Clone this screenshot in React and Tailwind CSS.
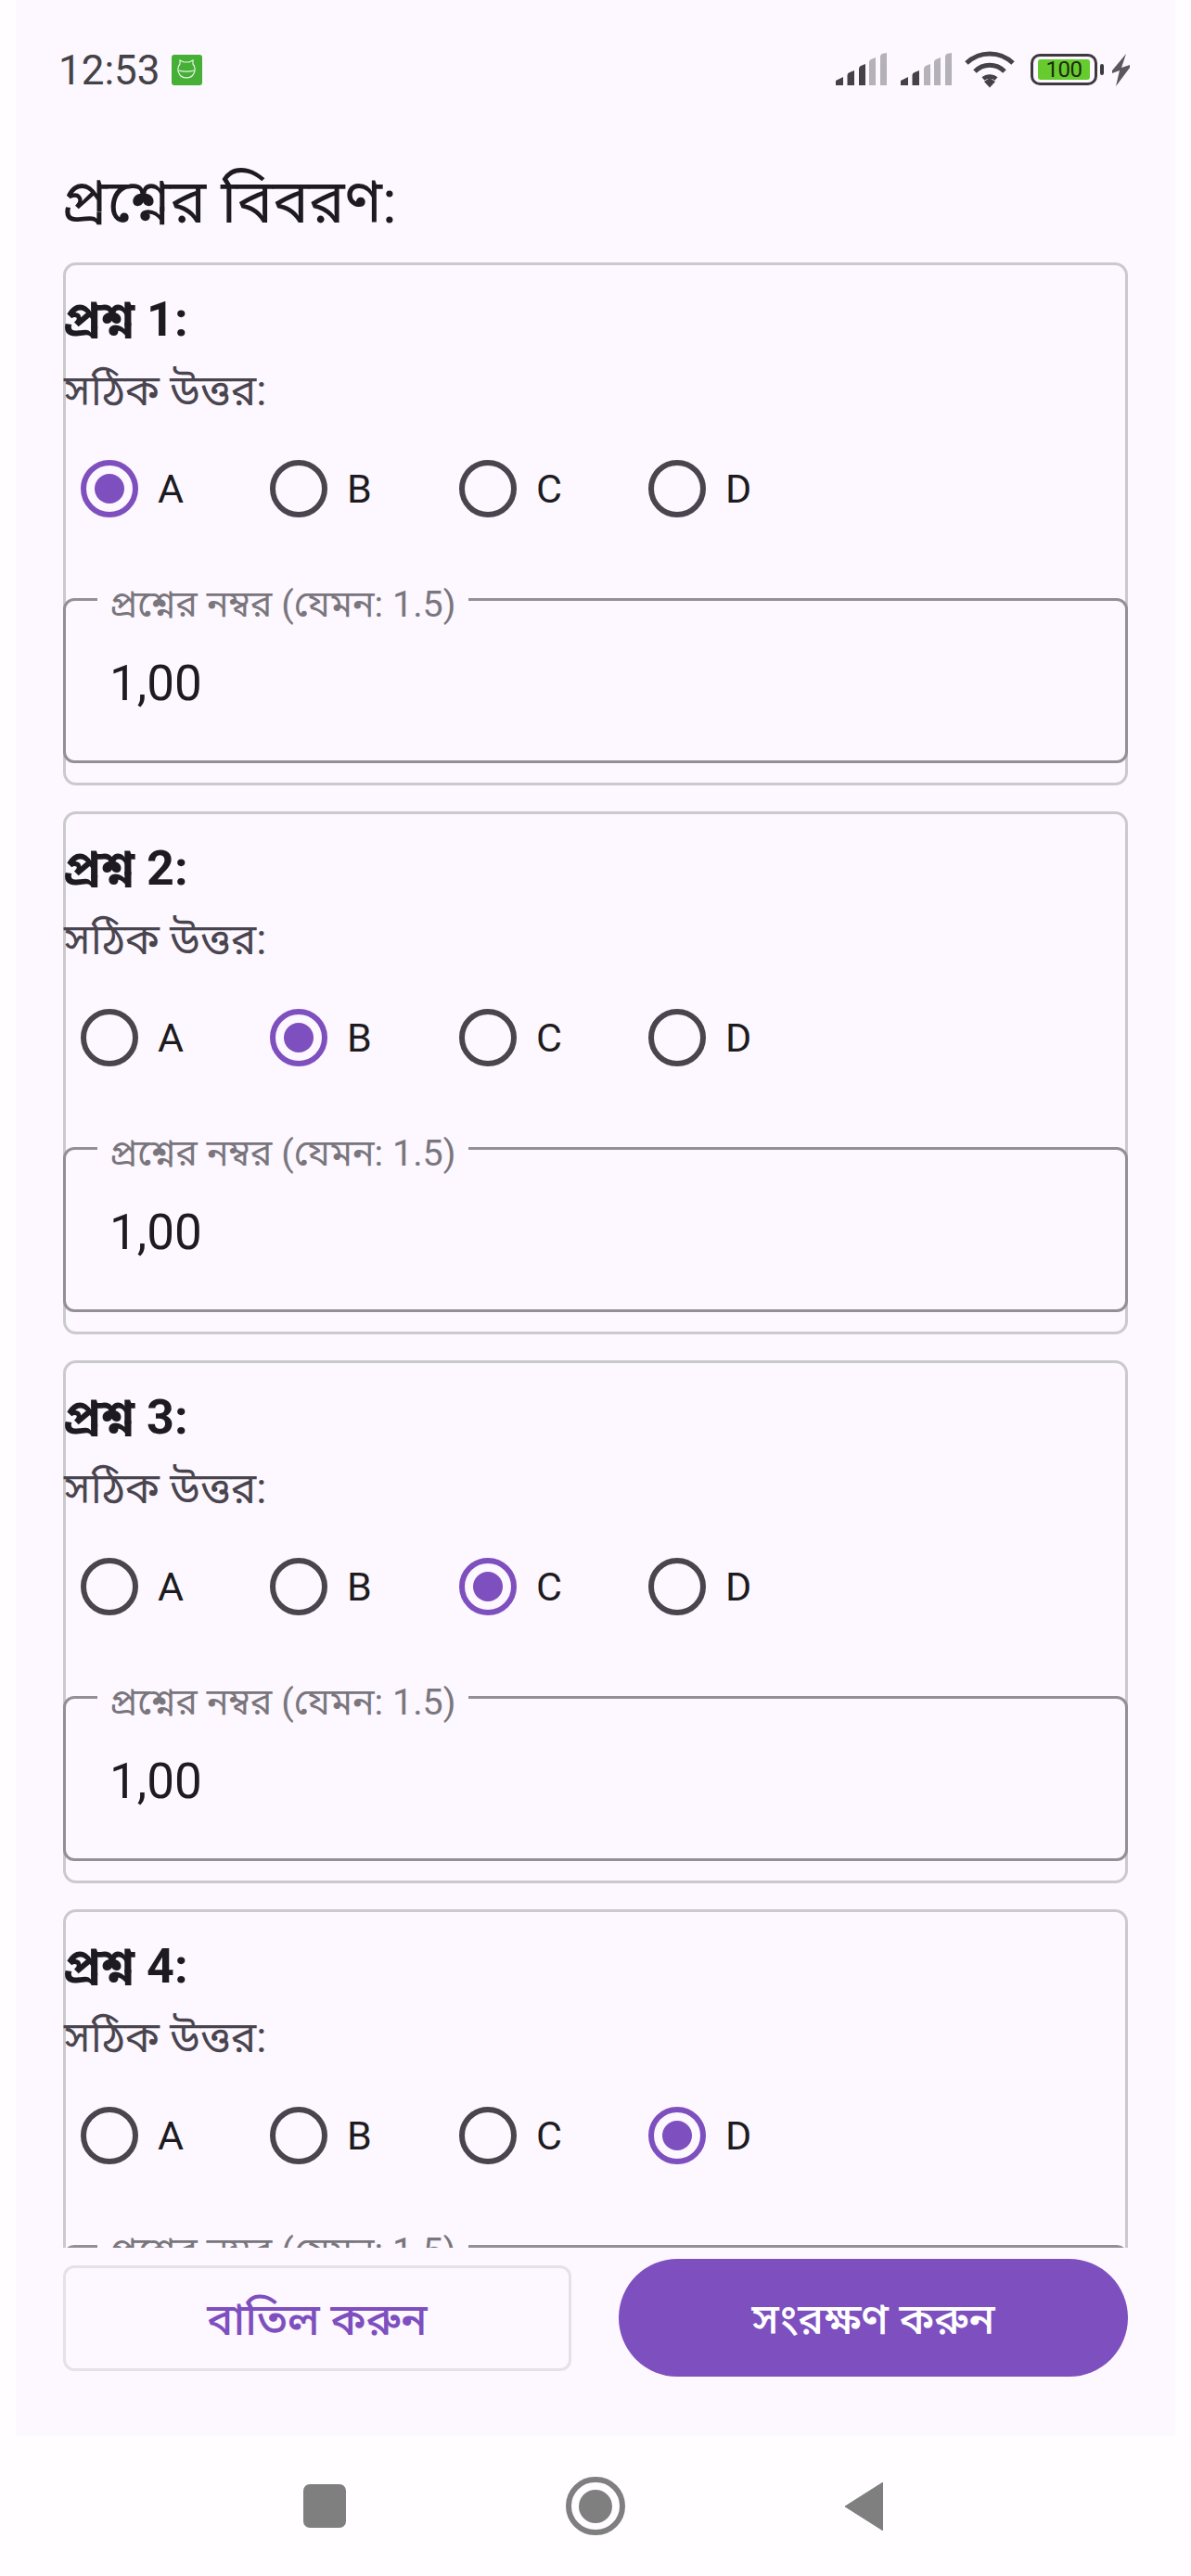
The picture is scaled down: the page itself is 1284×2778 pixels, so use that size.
const options = ['A', 'B', 'C', 'D'];

const Radio = ({ label, selected }) => (
  <div className="flex items-center w-[204px] shrink-0">
    <div className={`w-[62px] h-[62px] rounded-full border-[6px] flex items-center justify-center ${selected ? 'border-[#7e4fbe]' : 'border-[#49454f]'}`}>
      {selected && <div className="w-[32px] h-[32px] rounded-full bg-[#7e4fbe]" />}
    </div>
    <span className="ml-[21px] text-[43px] leading-[50px] text-[#1d1b20]">{label}</span>
  </div>
);

const QuestionCard = ({ number, answer }) => (
  <div className="shrink-0 h-[564px] border-[3px] border-[#cac9cc] rounded-[14px]">
    <div className="-mx-[3px]">
      <div className="h-[62px] mt-[28px] text-[52px] leading-[62px] font-bold text-[#1d1b20] whitespace-nowrap">প্রশ্ন {number}:</div>
      <div className="h-[60px] mt-[15px] ml-[1px] text-[46px] leading-[60px] text-[#49454f] whitespace-nowrap">সঠিক উত্তর:</div>
      <div className="flex pl-[19px] mt-[45px] h-[62px] items-center">
        {options.map((o) => (
          <Radio key={o} label={o} selected={o === answer} />
        ))}
      </div>
      <div className="relative mt-[87px] h-[178px] border-[3px] border-[#938f99] rounded-[12px] pl-[47px] pt-[5px] flex items-center">
        <span className="absolute left-[34px] -top-[21px] px-[13px] bg-[#fdf7ff] text-[39.5px] leading-[50px] text-[#79767d] whitespace-nowrap">প্রশ্নের নম্বর (যেমন: 1.5)</span>
        <span className="text-[53px] leading-[60px] text-[#1d1b20]">1,00</span>
      </div>
    </div>
  </div>
);

const Bars = ({ dark }) => {
  const bars = [
    { d: 'M0 30 L8 26 L8 35 L0 35 Z' },
    { d: 'M12.500 24 Q12.500 22 15 21 L20 19 L20 35 L12.500 35 Z' },
    { d: 'M25 17 Q25 15 27 14 L32 12 L32 35 L25 35 Z' },
    { d: 'M36 10 Q36 8 38 7 L43 5 L43 35 L36 35 Z' },
    { d: 'M48 4 Q48 2 50 1 L55 0 L55 35 L48 35 Z' },
  ];
  return (
    <svg width="55" height="36" viewBox="0 0 55 36" className="block">
      {bars.map((b, i) => (
        <path key={i} d={b.d} fill={i < dark ? '#444246' : '#b5b1b8'} />
      ))}
    </svg>
  );
};

const StatusIcons = () => (
  <div className="flex items-center">
    <Bars dark={3} />
    <div className="ml-[15px]"><Bars dark={2} /></div>
    <svg width="54" height="40" viewBox="0 0 54 40" className="ml-[14px] block" fill="none" stroke="#444246" strokeWidth="5">
      <path d="M2 13 C16 -0.500 38 -0.500 52 13" />
      <path d="M11 22 C20 13 34 13 43 22" />
      <path d="M20 30 C24 26.500 30 26.500 34 30" strokeWidth="4.500" />
      <path d="M21 33 L27 29 L33 33 L27 39.500 Z" fill="#444246" stroke="none" />
    </svg>
    <div className="ml-[17px] w-[72px] h-[34px] rounded-[10px] border-[3px] border-[#3c3a3e] py-[3px] px-[5px] flex">
      <div className="flex-1 rounded-[3px] bg-[#66cc2e] flex items-center justify-center text-[24px] leading-none text-[#1c2a12] tracking-[-0.5px]">100</div>
    </div>
    <div className="ml-[3px] w-[4px] h-[12px] rounded-[2px] bg-[#3c3a3e]" />
    <svg width="20" height="35" viewBox="0 0 20 35" className="ml-[9px] block">
      <path d="M15 0 L0 18 L0 21 L8 18 L4 35 L19 15 L19 12 L10 15 Z" fill="#5a585c" />
    </svg>
  </div>
);

export default function App() {
  return (
    <div className="w-[1284px] h-[2778px] bg-[#fffdff] font-['Roboto','Noto_Sans_Bengali','Noto_Sans','Lohit_Bengali',sans-serif] overflow-hidden flex flex-col">
      <div className="ml-[17px] w-[1250px] h-[2627px] bg-[#fdf7ff] shrink-0 flex flex-col pl-[51px] pr-[51px]">
        <div className="h-[283px] shrink-0">
          <div className="flex items-center justify-between h-[36px] mt-[57px]">
            <div className="flex items-center -ml-[4px] mt-[2px]">
              <span className="text-[44px] leading-[36px] text-[#444246] -ml-[1px]">12:53</span>
              <div className="ml-[12px] -mt-[2px] w-[33px] h-[33px] rounded-[3px] bg-[#45b035] flex items-center justify-center">
                <svg width="20" height="22" viewBox="0 0 20 22" fill="none" stroke="#e6f6e0" strokeWidth="1.200">
                  <path d="M3 5 L3 1 L7 3 L13 3 L17 1 L17 5 C19.500 8 19.500 12 18 15 C15.500 21.500 4.500 21.500 2 15 C0.500 12 0.500 8 3 5 Z" />
                  <path d="M1.500 12 C7 13.500 13 13.500 18.500 12" />
                </svg>
              </div>
            </div>
            <div className="-mr-[3px]"><StatusIcons /></div>
          </div>
          <h1 className="mt-[90px] -ml-[2px] text-[65px] leading-[70px] font-normal text-[#1d1b20] whitespace-nowrap">প্রশ্নের বিবরণ:</h1>
        </div>
        <div className="h-[2141px] shrink-0 overflow-hidden flex flex-col gap-[28px]">
          <QuestionCard number={1} answer="A" />
          <QuestionCard number={2} answer="B" />
          <QuestionCard number={3} answer="C" />
          <QuestionCard number={4} answer="D" />
        </div>
        <div className="flex-1 flex items-start justify-between">
          <button className="mt-[19px] w-[548px] h-[114px] pt-[4px] rounded-[12px] border-[3px] border-[#e6e0e9] bg-transparent text-[47px] font-medium text-[#7e4fbe]">বাতিল করুন</button>
          <button className="mt-[12px] w-[549px] h-[127px] pt-[4px] rounded-full bg-[#7e4fbe] text-[46.5px] font-medium text-white">সংরক্ষণ করুন</button>
        </div>
      </div>
      <div className="flex-1 flex items-center pl-[327px] gap-[237px]">
        <div className="w-[46px] h-[47px] rounded-[7px] bg-[#7f7f7f]" />
        <div className="w-[64px] h-[63px] rounded-full border-[6px] border-[#7f7f7f] flex items-center justify-center">
          <div className="w-[36px] h-[36px] rounded-full bg-[#7f7f7f]" />
        </div>
        <svg width="41" height="52" viewBox="0 0 41 52" className="block">
          <path d="M41 0 L41 52 L0 26 Z" fill="#7f7f7f" stroke="#7f7f7f" strokeWidth="1" strokeLinejoin="round" />
        </svg>
      </div>
    </div>
  );
}
